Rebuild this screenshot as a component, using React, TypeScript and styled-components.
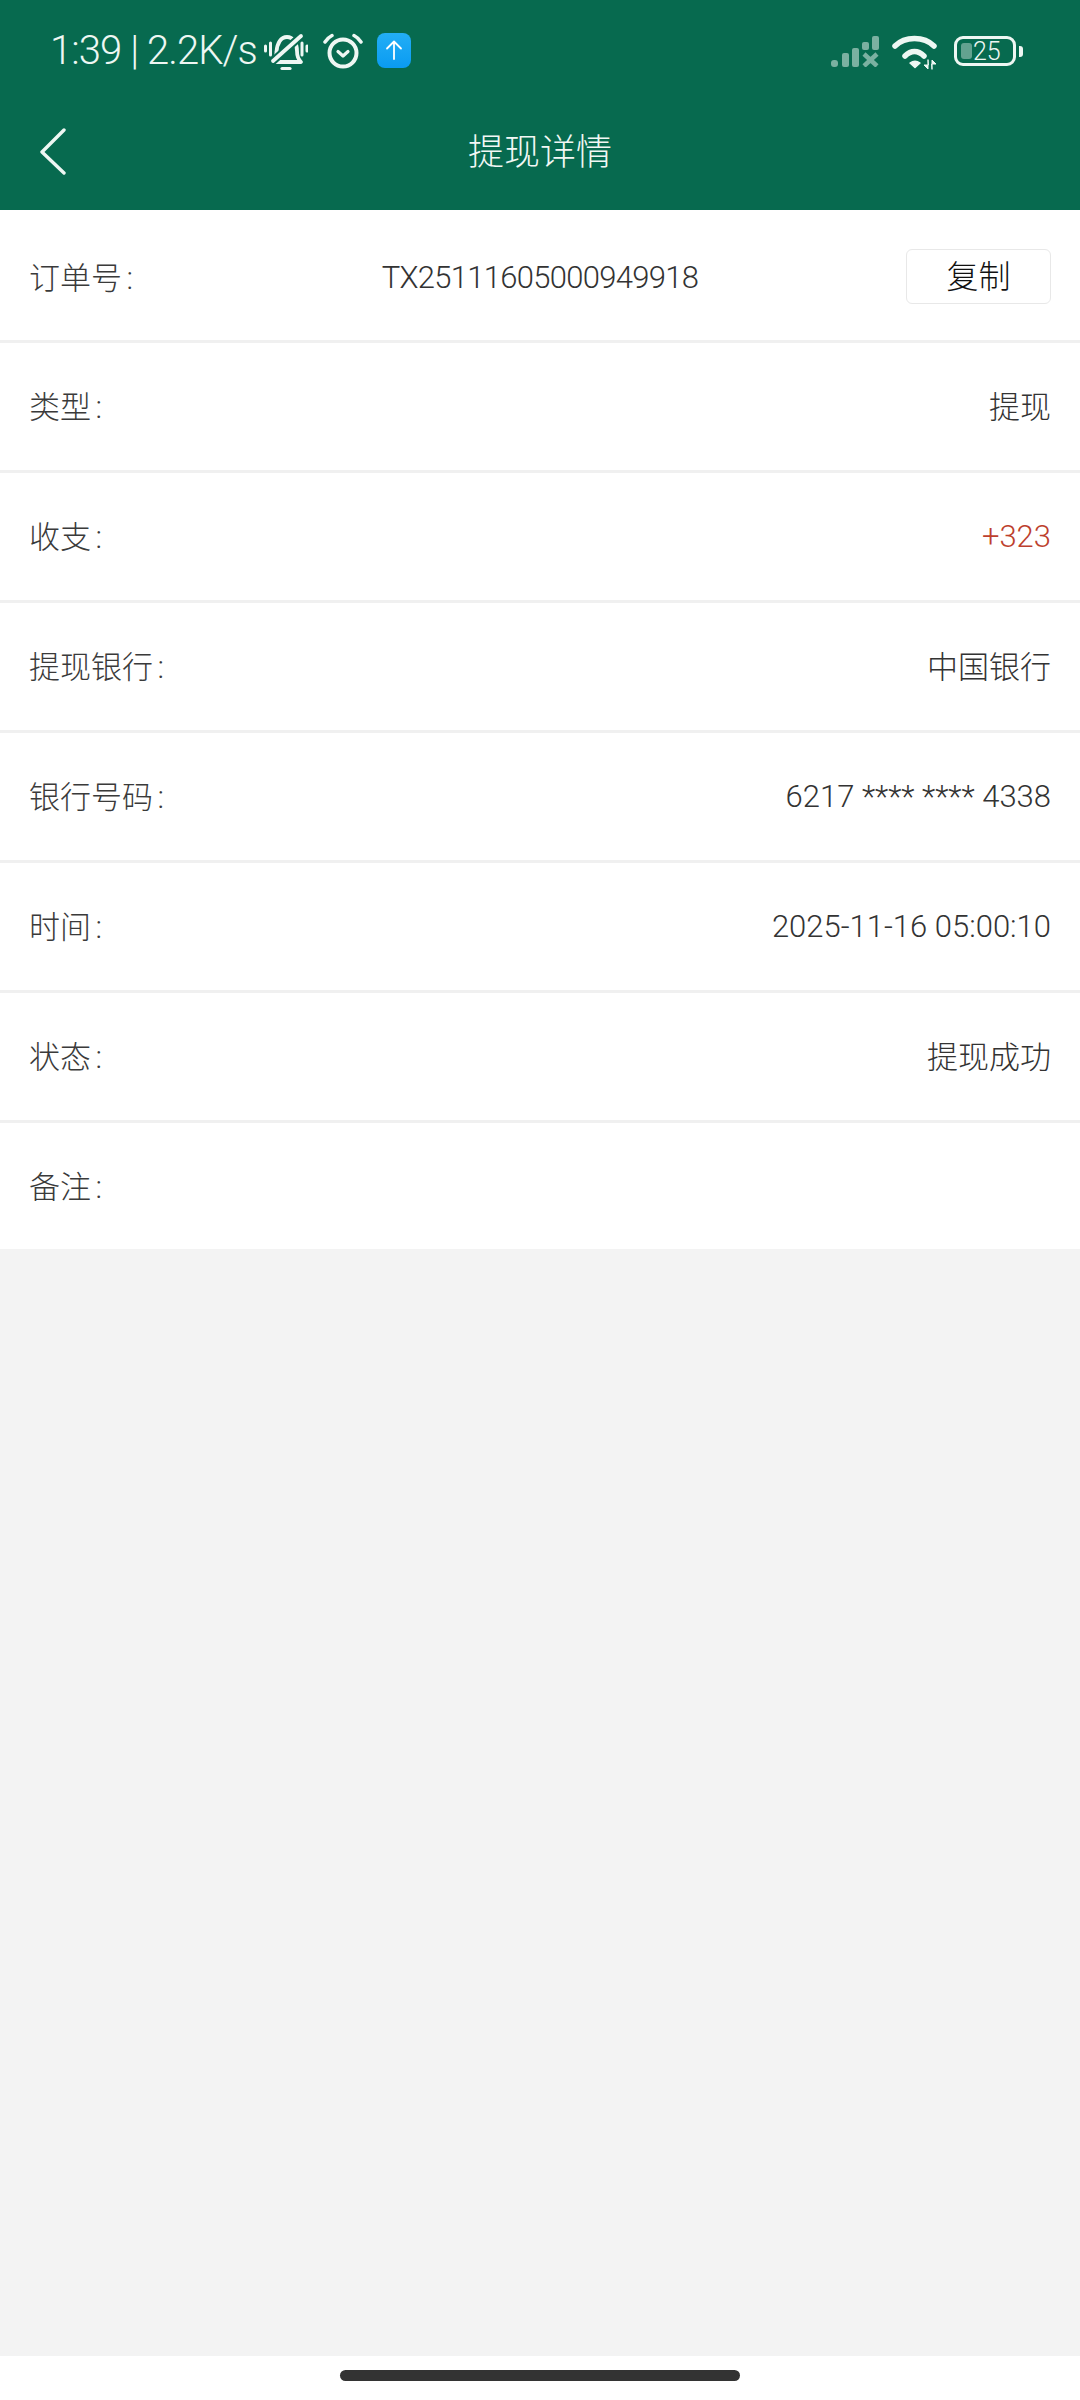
import React from "react";
import styled, { createGlobalStyle } from "styled-components";

const GlobalStyle = createGlobalStyle`
  html, body {
    margin: 0;
    padding: 0;
    background: #fff;
  }
  * {
    box-sizing: border-box;
  }
`;

const FONT = `Roboto, "Noto Sans CJK SC", sans-serif`;
const ICON = "#eef7f3";
const GREEN = "#076a4f";

const Page = styled.div`
  width: 1080px;
  height: 2400px;
  display: flex;
  flex-direction: column;
  font-family: ${FONT};
  font-weight: 300;
  color: #333;
`;

const Header = styled.header`
  background: ${GREEN};
  height: 210px;
  flex-shrink: 0;
  color: ${ICON};
`;

const StatusBar = styled.div`
  height: 100px;
  padding: 0 57px 0 50px;
  display: flex;
  align-items: center;
  justify-content: space-between;
`;

const StatusLeft = styled.div`
  display: flex;
  align-items: center;
`;

const StatusRight = styled.div`
  display: flex;
  align-items: center;
`;

const Clock = styled.span`
  font-size: 40px;
  letter-spacing: -0.9px;
  white-space: nowrap;
  margin-right: 7px;
`;

const BellSvg = styled.svg`
  margin-top: 3px;
`;

const AlarmSvg = styled.svg`
  margin-left: 15px;
  margin-top: 1px;
`;

const SignalSvg = styled.svg`
  margin-top: 3px;
  opacity: 0.5;
`;

const WifiSvg = styled.svg`
  margin-left: 13px;
  margin-top: 4px;
`;

const UploadBadge = styled.div`
  width: 34px;
  height: 35px;
  border-radius: 8px;
  margin-left: 14px;
  background: linear-gradient(180deg, #23aef5, #0a9bf2);
  display: flex;
  align-items: center;
  justify-content: center;
`;

const BatteryBox = styled.div`
  position: relative;
  width: 62px;
  height: 30px;
  border: 3px solid ${ICON};
  border-radius: 9px;
  margin-left: 16px;
  margin-top: 2px;
  display: flex;
  align-items: center;
  padding-left: 16px;
  font-size: 25px;
  line-height: 1;
`;

const BatteryFill = styled.div`
  position: absolute;
  left: 4px;
  top: 4px;
  bottom: 4px;
  width: 11px;
  border-radius: 3px;
  background: rgba(238, 247, 243, 0.4);
`;

const BatteryLabel = styled.span`
  position: relative;
`;

const BatteryCap = styled.div`
  width: 4px;
  height: 11px;
  border-radius: 0 3px 3px 0;
  background: ${ICON};
  margin-left: 3px;
  margin-top: 2px;
`;

const NavBar = styled.div`
  position: relative;
  height: 110px;
  padding-bottom: 12px;
  display: flex;
  align-items: center;
  justify-content: center;
`;

const BackButton = styled.div`
  position: absolute;
  left: 39px;
  top: 28px;
  display: flex;
`;

const NavTitle = styled.h1`
  margin: 0;
  font-size: 36px;
  font-weight: 300;
  color: #f2f8f5;
`;

const List = styled.div`
  background: #fff;
  flex-shrink: 0;
`;

const Row = styled.div<{ $last?: boolean }>`
  position: relative;
  height: ${(p) => (p.$last ? 126 : 130)}px;
  padding: 0 29px;
  display: flex;
  align-items: center;
  justify-content: space-between;
  font-size: 31px;
  border-bottom: ${(p) => (p.$last ? "none" : "3px solid #f0f0f0")};
`;

const OrderRow = styled(Row)`
  height: 133px;
  padding-top: 4px;
`;

const Label = styled.span`
  color: #3a3a3a;
  white-space: nowrap;
  word-spacing: -3px;
  margin-bottom: 4px;
`;

const Value = styled.span<{ $accent?: boolean; $cjk?: boolean }>`
  color: ${(p) => (p.$accent ? "#bd3f2e" : "#333")};
  white-space: nowrap;
  margin-bottom: ${(p) => (p.$cjk ? 4 : 0)}px;
`;

const OrderNumber = styled.span`
  position: absolute;
  left: 0;
  right: 0;
  text-align: center;
  letter-spacing: -0.7px;
  color: #333;
`;

const CopyButton = styled.button`
  position: relative;
  width: 145px;
  height: 55px;
  padding: 0 0 5px;
  margin-bottom: 1px;
  background: #fff;
  border: 1px solid #e8e8e8;
  border-radius: 6px;
  font-family: ${FONT};
  font-size: 32px;
  font-weight: 300;
  color: #111;
`;

const Filler = styled.div`
  flex: 1;
  background: #f3f3f3;
`;

const HomeArea = styled.div`
  height: 44px;
  flex-shrink: 0;
  background: #fff;
  display: flex;
  justify-content: center;
  padding-top: 14px;
`;

const HomeBar = styled.div`
  width: 400px;
  height: 11px;
  border-radius: 6px;
  background: #333;
`;

const BellOffIcon = () => (
  <BellSvg width="44" height="38" viewBox="0 0 44 38" fill="none" stroke={ICON} strokeLinecap="round" strokeLinejoin="round">
    <path d="M11 29c1-2 1-5 1.500-10C13 10 17 4 23 4s10 6 10 14c0 4 1 8 4 11z" strokeWidth="3.8" />
    <path d="M18 35.500h8" strokeWidth="3.2" />
    <path d="M9 28 37 3" stroke={GREEN} strokeWidth="8" />
    <path d="M9 28 37 3" strokeWidth="3.8" />
    <path d="M1.500 13v5M6.500 10v12M38 10v12M43 13v5" strokeWidth="3" />
  </BellSvg>
);

const AlarmIcon = () => (
  <AlarmSvg width="40" height="36" viewBox="0 0 40 36" fill="none" stroke={ICON} strokeLinecap="round" strokeLinejoin="round">
    <circle cx="20" cy="20" r="13.500" strokeWidth="4" />
    <path d="M15 18.500l5 4.500 5-4.500" strokeWidth="3.200" />
    <path d="M2 9c2-3 4-5 7-6.500M38 9c-2-3-4-5-7-6.500" strokeWidth="3.500" />
  </AlarmSvg>
);

const ArrowUpIcon = () => (
  <svg width="20" height="22" viewBox="0 0 20 22" fill="none" stroke="#fff" strokeWidth="1.8" strokeLinecap="round" strokeLinejoin="round">
    <path d="M10 20V3M3 9.500 10 2.500l7 7" />
  </svg>
);

const SignalIcon = () => (
  <SignalSvg width="48" height="31" viewBox="0 0 48 31" fill={ICON}>
    <rect x="0" y="24" width="7" height="7" rx="3" />
    <rect x="11" y="17" width="7" height="14" rx="2" />
    <rect x="21" y="12" width="7" height="19" rx="2" />
    <rect x="31" y="6" width="7" height="8" rx="2" />
    <rect x="41" y="0" width="7" height="14" rx="2" />
    <path d="M33 18l13 12M46 18 33 30" stroke={ICON} strokeWidth="4.500" fill="none" />
  </SignalSvg>
);

const WifiIcon = () => (
  <WifiSvg width="46" height="35" viewBox="0 0 46 35" fill="none" stroke={ICON} strokeLinecap="round" strokeLinejoin="round">
    <path d="M3 11C13 1 32 1 42 11" strokeWidth="5.500" />
    <path d="M13 21c6-6 13-6 19 0" strokeWidth="5.500" />
    <path d="M18 28l5 4.500 5-4.500c-3-2-7-2-10 0z" fill={ICON} strokeWidth="1.500" />
    <path d="M36 25v9l-4-4h4z" fill={ICON} strokeWidth="1" />
    <path d="M40 34v-9l4 4h-4z" fill={ICON} strokeWidth="1" />
  </WifiSvg>
);

const ChevronLeft = () => (
  <svg width="28" height="48" viewBox="0 0 28 48" fill="none" stroke={ICON} strokeWidth="3.4" strokeLinecap="round" strokeLinejoin="round">
    <path d="M25 2 3 24l22 21" />
  </svg>
);

const rows = [
  { label: "类型 :", value: "提现", cjk: true },
  { label: "收支 :", value: "+323", accent: true },
  { label: "提现银行 :", value: "中国银行", cjk: true },
  { label: "银行号码 :", value: "6217 **** **** 4338" },
  { label: "时间 :", value: "2025-11-16 05:00:10" },
  { label: "状态 :", value: "提现成功", cjk: true },
];

export default function App() {
  return (
    <Page>
      <GlobalStyle />
      <Header>
        <StatusBar>
          <StatusLeft>
            <Clock>1:39 | 2.2K/s</Clock>
            <BellOffIcon />
            <AlarmIcon />
            <UploadBadge>
              <ArrowUpIcon />
            </UploadBadge>
          </StatusLeft>
          <StatusRight>
            <SignalIcon />
            <WifiIcon />
            <BatteryBox>
              <BatteryFill />
              <BatteryLabel>25</BatteryLabel>
            </BatteryBox>
            <BatteryCap />
          </StatusRight>
        </StatusBar>
        <NavBar>
          <BackButton>
            <ChevronLeft />
          </BackButton>
          <NavTitle>提现详情</NavTitle>
        </NavBar>
      </Header>
      <List>
        <OrderRow>
          <Label>订单号 :</Label>
          <OrderNumber>TX25111605000949918</OrderNumber>
          <CopyButton>复制</CopyButton>
        </OrderRow>
        {rows.map((row) => (
          <Row key={row.label}>
            <Label>{row.label}</Label>
            <Value $accent={row.accent} $cjk={row.cjk}>
              {row.value}
            </Value>
          </Row>
        ))}
        <Row $last>
          <Label>备注 :</Label>
        </Row>
      </List>
      <Filler />
      <HomeArea>
        <HomeBar />
      </HomeArea>
    </Page>
  );
}
